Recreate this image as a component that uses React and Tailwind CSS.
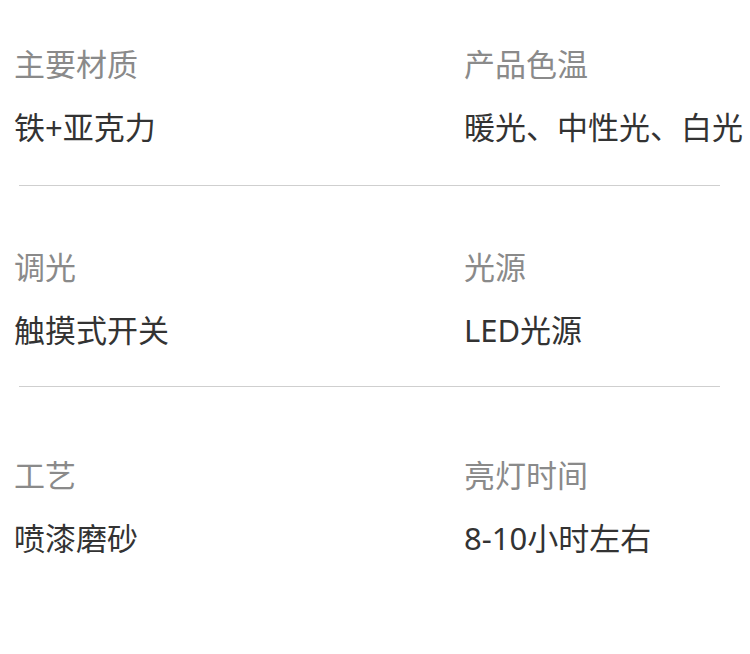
export default function App() {
  const rows = [
    { a: ["主要材质", "铁+亚克力"], b: ["产品色温", "暖光、中性光、白光"], pt: "pt-[49px]", pb: "pb-[42px]", border: true },
    { a: ["调光", "触摸式开关"], b: ["光源", "LED光源"], pt: "pt-[66px]", pb: "pb-[40px]", border: true },
    { a: ["工艺", "喷漆磨砂"], b: ["亮灯时间", "8-10小时左右"], pt: "pt-[73px]", pb: "pb-[96px]", border: false },
  ];
  return (
    <div className="w-[750px] h-[654px] bg-white overflow-hidden">
      <div className="font-['Noto_Sans','Noto_Sans_CJK_SC',sans-serif]">
        {rows.map((r, i) => (
          <div key={i}>
            <div className={`grid grid-cols-[450px_1fr] pl-[14px] ${r.pt} ${r.pb}`}>
              {[r.a, r.b].map((c, j) => (
                <div key={j} className="flex flex-col gap-[32px] whitespace-nowrap">
                  <div className="text-[31px] leading-[31px] text-[#8a8a8a]">{c[0]}</div>
                  <div className="text-[31px] leading-[31px] text-[#333333]">{c[1]}</div>
                </div>
              ))}
            </div>
            {r.border && <div className="ml-[19px] w-[701px] h-px bg-[#cfcfcf]" />}
          </div>
        ))}
      </div>
    </div>
  );
}
